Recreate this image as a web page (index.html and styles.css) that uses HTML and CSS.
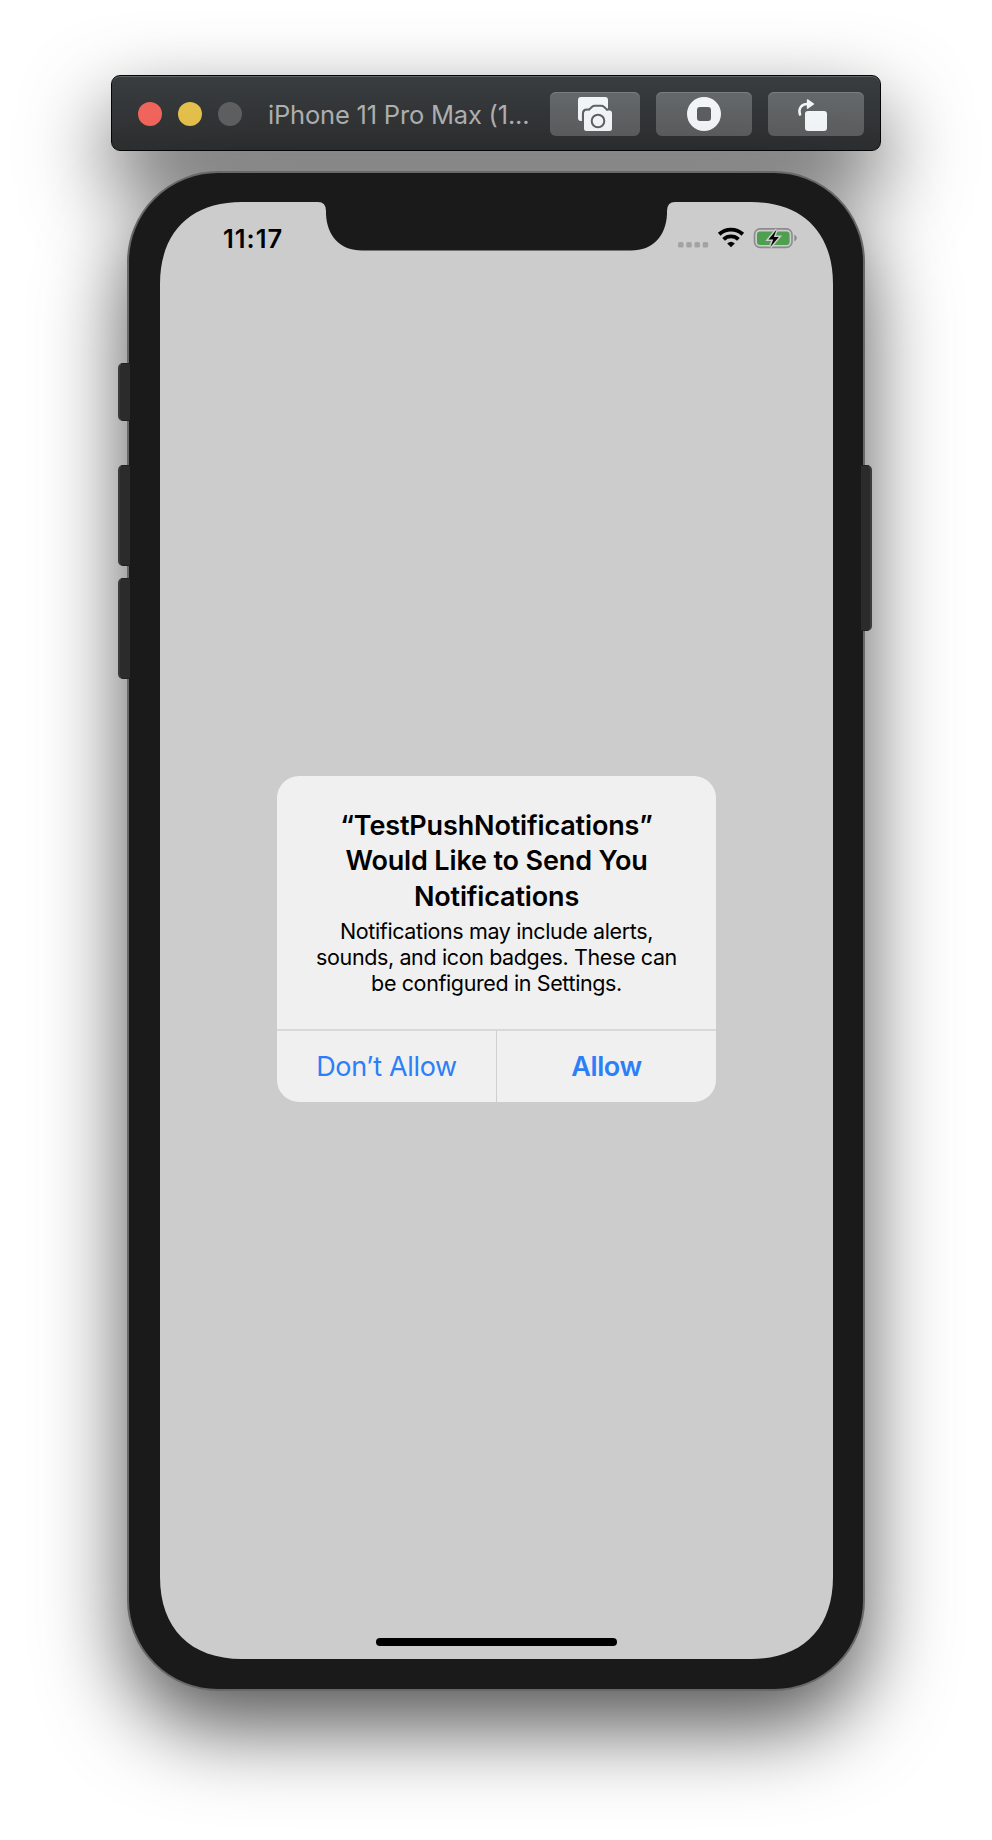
FILE: index.html
```html
<!DOCTYPE html>
<html lang="en">
<head>
<meta charset="utf-8">
<title>iPhone 11 Pro Max</title>
<link rel="stylesheet" href="styles.css">
</head>
<body>
<main class="simulator">
  <header class="titlebar">
    <span class="light light-close"></span>
    <span class="light light-min"></span>
    <span class="light light-off"></span>
    <span class="title">iPhone 11 Pro Max (1...</span>
    <span class="tool tool-shot">
      <svg width="90" height="44" viewBox="0 0 90 44">
        <path d="M31 5H55Q58 5 58 8V18H53L50 15.500H45L42 18.500H37Q32.500 18.500 32.200 22V29H31Q28 29 28 26V8Q28 5 31 5Z" fill="#f2f5f7"/>
        <path d="M34 36.500V21.500Q34 18.500 37 18.500H39.500L42.500 15.800Q43.500 15 45 15H51Q52.500 15 53.500 15.800L56.500 18.500H59.500Q62 18.500 62 21.500V36.500Q62 39 59.500 39H36.500Q34 39 34 36.500Z" fill="#f2f5f7"/>
        <path d="M32.900 29V21.500Q32.900 17.400 37 17.400H39.200L41.800 15Q43.200 13.800 45 13.800H51Q52.800 13.800 54.200 15L56.800 17.400H58" fill="none" stroke="#606365" stroke-width="2"/>
        <circle cx="48" cy="29" r="6.300" fill="#f2f5f7" stroke="#5e6062" stroke-width="2"/>
      </svg>
    </span>
    <span class="tool tool-home">
      <svg width="96" height="44" viewBox="0 0 96 44">
        <circle cx="48" cy="22" r="17" fill="#f2f5f7"/>
        <rect x="41" y="15" width="14" height="14" rx="3" fill="#5c5e60"/>
      </svg>
    </span>
    <span class="tool tool-rotate">
      <svg width="96" height="44" viewBox="0 0 96 44">
        <rect x="37" y="19" width="22" height="20" rx="3" fill="#f2f5f7"/>
        <path d="M32 22.500C30 16 34 12 39.500 12" fill="none" stroke="#f2f5f7" stroke-width="2.600" stroke-linecap="round"/>
        <path d="M39.500 7.800L45.500 12L39.500 16.200Z" fill="#f2f5f7" stroke="#f2f5f7" stroke-width="1.300" stroke-linejoin="round"/>
      </svg>
    </span>
  </header>

  <section class="phone">
    <i class="key key-mute"></i>
    <i class="key key-up"></i>
    <i class="key key-down"></i>
    <i class="key key-power"></i>
    <svg class="glass" width="673" height="1457" viewBox="0 0 673 1457">
      <path fill="#ccc" d="M82 0H158Q166 0 166 9V12C167 34 180 48.500 202 48.500H471C493 48.500 506 34 507 12V9Q507 0 515 0H591C642.500 0 673 30.500 673 82V1375C673 1426.500 642.500 1457 591 1457H82C30.500 1457 0 1426.500 0 1375V82C0 30.500 30.500 0 82 0Z"/>
    </svg>
    <div class="screen">
      <div class="status">
        <span class="clock">11:17</span>
        <svg class="signals" width="122" height="24" viewBox="0 0 122 24">
          <g fill="#a3a3a3">
            <rect x="1" y="15" width="5.600" height="5.600" rx="1.700"/>
            <rect x="9.200" y="15" width="5.600" height="5.600" rx="1.700"/>
            <rect x="17.400" y="15" width="5.600" height="5.600" rx="1.700"/>
            <rect x="25.600" y="15" width="5.600" height="5.600" rx="1.700"/>
          </g>
          <g fill="none" stroke="#000" stroke-width="3.900">
            <path d="M42.200 7.300A17.300 17.300 0 0 1 65.800 7.300"/>
            <path d="M46.600 12.300A10.800 10.800 0 0 1 61.400 12.300"/>
          </g>
          <path d="M50.200 16.400Q54 13.200 57.800 16.400L54 20.300Z"/>
          <rect x="77.500" y="1.900" width="37.500" height="18.500" rx="5.500" fill="none" stroke="#8b8b8b" stroke-width="1.600"/>
          <rect x="80" y="4.400" width="32.600" height="13.600" rx="3.200" fill="#4f9f50"/>
          <path d="M117.300 7.500Q119.800 8.600 119.800 11T117.300 14.500Z" fill="#8b8b8b"/>
          <path d="M99.500 2.700L91.500 12.400H96.300L93.300 19.900L101.800 10H96.800Z" fill="#000" stroke="#ccc" stroke-width="3" paint-order="stroke"/>
        </svg>
      </div>
      <div class="stage">
        <div class="alert">
          <div class="message">
            <h1>“TestPushNotifications”<br>Would Like to Send You<br>Notifications</h1>
            <p>Notifications may include alerts,<br>sounds, and icon badges. These can<br>be configured in Settings.</p>
          </div>
          <div class="actions">
            <span class="action deny">Don’t Allow</span>
            <span class="action allow">Allow</span>
          </div>
        </div>
      </div>
      <div class="home"></div>
    </div>
  </section>
</main>
</body>
</html>
```
FILE: styles.css
```css
* { box-sizing: border-box; }
body {
  margin: 0;
  height: 1840px;
  background: #fff;
  font-family: Inter, "Liberation Sans", sans-serif;
  overflow: hidden;
}
.simulator {
  display: flex;
  flex-direction: column;
  align-items: center;
  padding-top: 75px;
}
.titlebar {
  display: flex;
  align-items: center;
  width: 770px;
  height: 76px;
  padding: 2px 16px 0 26px;
  border: 1px solid #050505;
  border-radius: 9px;
  background: linear-gradient(#393d3f, #2d2e30);
  box-shadow: inset 0 1px 0 #626667, 0 36px 84px rgba(0, 0, 0, .67);
}
.light { flex: none; width: 24px; height: 24px; margin-right: 16px; border-radius: 50%; }
.light-close { background: #ef655b; }
.light-min { background: #e3c04c; }
.light-off { background: #5e5f61; }
.title {
  width: 292px;
  flex: none;
  padding-left: 10px;
  color: #adafb0;
  font-size: 25.500px;
  letter-spacing: -.2px;
  white-space: nowrap;
}
.tool {
  flex: none;
  height: 44px;
  border-radius: 6px;
  background: linear-gradient(#64686a, #5b5d5e);
  box-shadow: inset 0 1px 0 #7a7d7e;
}
.tool svg { display: block; }
.tool-shot { width: 90px; }
.tool-home, .tool-rotate { width: 96px; margin-left: 16px; }

.phone {
  position: relative;
  width: 738px;
  height: 1520px;
  margin-top: 20px;
  padding: 31px 32px 32px 33px;
  border: 2px solid #686868;
  border-radius: 91px;
  background: #1a1a1a;
  box-shadow: 0 36px 84px rgba(0, 0, 0, .67);
}
.key {
  position: absolute;
  left: -11px;
  width: 12px;
  border: 1px solid #202020;
  border-left: 2px solid #3a3a3a;
  border-right: 0;
  border-radius: 5px 0 0 5px;
  background: #2b2b2b;
}
.key-mute { top: 190px; height: 58px; }
.key-up { top: 292px; height: 101px; }
.key-down { top: 405px; height: 101px; }
.key-power {
  top: 292px;
  left: auto;
  right: -9px;
  width: 11px;
  height: 166px;
  border-left: 0;
  border-right: 2px solid #3c3c3c;
  border-radius: 0 5px 5px 0;
}
.glass { position: absolute; left: 31px; top: 29px; }
.screen {
  position: relative;
  display: flex;
  flex-direction: column;
  align-items: center;
  height: 100%;
  margin: -2px -2px 0;
}
.status {
  display: flex;
  align-items: center;
  justify-content: space-between;
  width: 100%;
  height: 72px;
  padding: 0 34px 0 63px;
}
.clock { font-size: 25.500px; font-weight: 600; letter-spacing: 1px; }
.signals { margin-top: 2px; }
.stage { flex: 1; display: flex; align-items: flex-start; padding-top: 502px; }
.alert {
  display: flex;
  flex-direction: column;
  width: 439px;
  height: 326px;
  border-radius: 22px;
  background: #f0f0f0;
  overflow: hidden;
}
.message {
  height: 255px;
  padding-top: 31.500px;
  border-bottom: 2px solid #d9d9d9;
  text-align: center;
  white-space: nowrap;
}
h1 { margin: 0; font-size: 27px; line-height: 35.700px; font-weight: 600; letter-spacing: -.15px; }
p { margin: 3.500px 0 0; font-size: 21.500px; line-height: 26px; letter-spacing: -.38px; }
.actions { display: flex; flex: 1; }
.action {
  flex: 1;
  display: flex;
  align-items: center;
  justify-content: center;
  color: #2c7ff7;
  font-size: 27px;
  letter-spacing: -.35px;
}
.deny { border-right: 1px solid #cfcfcf; }
.allow { font-weight: 600; }
.home { width: 241px; height: 8px; margin-bottom: 9px; border-radius: 5px; background: #000; }
```
